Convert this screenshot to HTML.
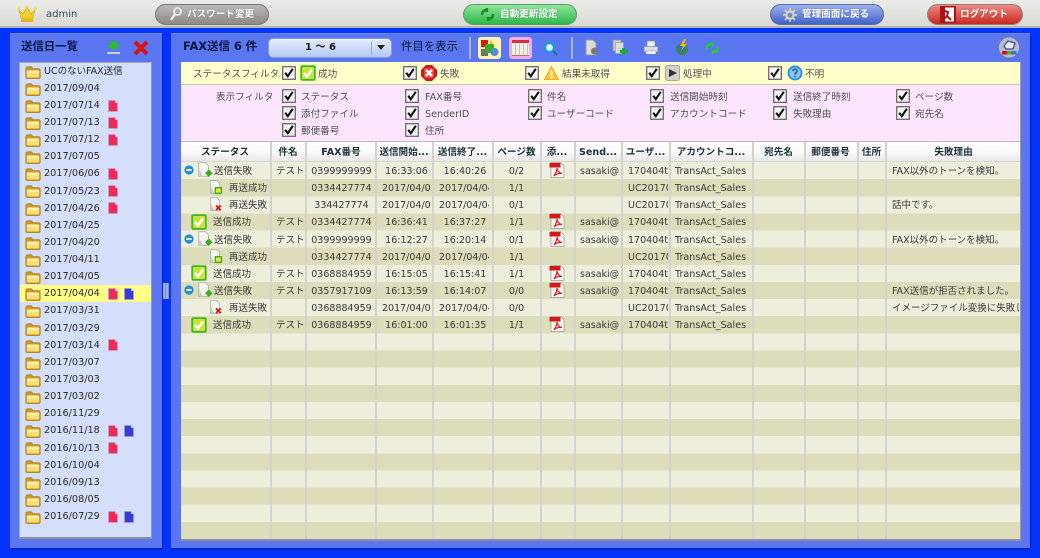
<!DOCTYPE html>
<html lang="ja"><head><meta charset="utf-8"><title>FAX送信</title>
<style>
*{box-sizing:border-box}
html,body{margin:0;padding:0;width:1040px;height:558px;overflow:hidden;background:#0433ff}
body{font-family:"DejaVu Sans","Noto Sans CJK JP",sans-serif;font-size:9.5px;color:#444}
#w{position:absolute;left:0;top:0;width:1040px;height:558px;overflow:hidden;filter:blur(.35px)}
.a{position:absolute}
.t{position:absolute;white-space:nowrap;line-height:17px;height:17px}
svg{position:absolute;overflow:visible}
#top{left:0;top:0;width:1040px;height:28px;background:linear-gradient(#ececea,#d8d8d4);border-bottom:2px solid #b5b5b2}
.pill{position:absolute;top:4px;height:21px;border-radius:11px;border:1px solid #777;color:#fff;font-weight:bold;line-height:20px;white-space:nowrap;font-size:9.6px;text-shadow:0 0 1px rgba(0,0,0,.3)}
.panel{position:absolute;background:#5a76f0;box-shadow:1px 2px 1px #0224c8;border-top:1px solid #6f88f2}
.d{font-size:9.7px;color:#2a2a2a;left:44px;margin-top:.7px}
.hi{left:20px;top:285px;width:131px;height:17px;background:#ffff88}
.h{position:absolute;top:0;height:20px;line-height:22px;text-align:center;font-weight:bold;color:#1f3238;white-space:nowrap;overflow:hidden;font-size:9.6px}
.c{position:absolute;top:1px;height:17px;line-height:17px;white-space:nowrap;overflow:hidden;color:#3a3a3a}
.a1{left:276px;width:29px}
.a2{left:307px;width:69px;text-align:center}
.a3{left:382px;width:49px;text-align:center}
.a3l{left:382px;width:49px}
.a4{left:439px;width:52px;text-align:center}
.a4l{left:439px;width:50px}
.a5{left:494px;width:45px;text-align:center}
.a7{left:580px;width:41px}
.a8{left:628px;width:40px}
.a9{left:675px;width:76px;font-size:9.6px}
.a13{left:892px;width:127px}
.sep{position:absolute;top:142px;height:397px;width:2px;background:#d3d3cc}
.f{font-size:9.6px;color:#505050;margin-top:1px}
</style></head><body>
<svg width="0" height="0" style="position:absolute">
<defs>
<symbol id="folder" viewBox="0 0 16 13"><path d="M.8 3Q.8 .8 2.800 .8H6.500L8 2.600H13.500Q15.200 2.600 15.200 4.300V11Q15.200 12.600 13.500 12.600H2.500Q.8 12.600 .8 11Z" fill="#c8962c" stroke="#b08020" stroke-width=".8"/><path d="M1.800 5.800Q1.800 4.300 3.200 4.300H12.800Q14.200 4.300 14.200 5.800V10.400Q14.200 11.500 12.800 11.500H3.200Q1.800 11.500 1.800 10.400Z" fill="#f9de72"/><rect x="2.500" y="5" width="11" height="2.200" fill="#fdf0b0"/></symbol>
<symbol id="red" viewBox="0 0 10 12"><path d="M.5.5H7L9.5 3V11.500H.5Z" fill="#ee2a58" stroke="#c8a0c8" stroke-width=".7"/><path d="M7 .5V3H9.5Z" fill="#ffc0d0"/></symbol>
<symbol id="blue" viewBox="0 0 10 12"><path d="M.5.5H7L9.5 3V11.500H.5Z" fill="#3a3ad8" stroke="#98a0d8" stroke-width=".7"/><path d="M7 .5V3H9.5Z" fill="#c8d0ff"/></symbol>
<symbol id="cb" viewBox="0 0 14 14"><rect x=".7" y=".7" width="12.6" height="12.6" fill="#f4f4f4" stroke="#6a6a6a" stroke-width="1.300"/><path d="M3.200 6.800L5.800 10.200L10.800 2.800" fill="none" stroke="#111" stroke-width="2.100"/></symbol>
<symbol id="ok" viewBox="0 0 16 16"><rect x=".3" y=".3" width="15.400" height="15.400" rx="2" fill="#3eb822"/><rect x="2" y="2" width="12" height="12" rx="1" fill="#c8e43c"/><path d="M4 8L7 11.500L12 4.500" fill="none" stroke="#fff" stroke-width="2.400"/></symbol>
<symbol id="pdf" viewBox="0 0 16 16"><path d="M2 .5H11.500L15 4V15.500H2Z" fill="#f8f8f6" stroke="#999" stroke-width=".7"/><rect x=".5" y="1" width="11" height="4.500" fill="#d81818"/><path d="M5 14C7 11 8 8 8 6C8.500 9 10 11 13 11.500C10 11 7 12 5 14Z" fill="none" stroke="#e02020" stroke-width="1.200"/></symbol>
<symbol id="pg" viewBox="0 0 12 16"><path d="M.8.8H8L11.200 4V15.200H.8Z" fill="#f6f6f2" stroke="#a8a8a0" stroke-width=".8"/><path d="M1.500 15V8L5 15Z" fill="#c8c8c4"/></symbol>
<symbol id="minus" viewBox="0 0 10 10"><circle cx="5" cy="5" r="4.600" fill="#1c8fd8"/><rect x="2" y="3.500" width="6" height="3" rx=".6" fill="#d8f0ff" stroke="#0a5a98" stroke-width=".5"/></symbol>
<symbol id="st1" viewBox="0 0 16 17"><use href="#pg" x="0" y="0" width="12" height="16"/><path d="M11.500 8L15.500 12L11.500 16L7.500 12Z" fill="#38b020"/></symbol>
<symbol id="st2" viewBox="0 0 14 16"><use href="#pg" x="0" y="0" width="12" height="15"/><rect x="5.500" y="7.500" width="8" height="7.500" rx="1" fill="#38b020"/><rect x="7" y="9" width="5" height="4.500" fill="#e8e840"/></symbol>
<symbol id="st3" viewBox="0 0 14 16"><use href="#pg" x="0" y="0" width="12" height="15"/><path d="M7 9L12 14M12 9L7 14" stroke="#e01010" stroke-width="2"/></symbol>
</defs></svg>
<div id="w">
<div class="a" id="top"></div>
<svg style="left:17px;top:5px" width="20" height="18" viewBox="0 0 20 18"><path d="M2 5L6 9L10 2L14 9L18 5L16 13H4Z" fill="#f8d028" stroke="#d0a010" stroke-width=".6"/><rect x="4" y="13.500" width="12" height="3.500" fill="#e8b818"/><circle cx="2" cy="4" r="1.500" fill="#f8d830"/><circle cx="10" cy="2" r="1.500" fill="#f8d830"/><circle cx="18" cy="4" r="1.500" fill="#f8d830"/></svg>
<div class="t" style="left:46px;top:6px;font-size:10px;color:#2e555c">admin</div>
<div class="pill" style="left:155px;width:114px;background:linear-gradient(#bbb8b6,#8c8a8a);padding-left:31px">パスワード変更</div>
<svg style="left:169px;top:7px" width="13" height="15" viewBox="0 0 13 15"><circle cx="8.500" cy="4.500" r="3.500" fill="none" stroke="#e8eef0" stroke-width="1.800"/><path d="M6 7L2 13" stroke="#e8eef0" stroke-width="2.200"/></svg>
<div class="pill" style="left:463px;width:114px;background:linear-gradient(#8fe49a,#2fb84a);padding-left:36px;border-color:#5c9c68">自動更新設定</div>
<svg style="left:480px;top:8px" width="15" height="13" viewBox="0 0 15 13"><path d="M2 7Q2 2 7 2M7 0V4M13 6Q13 11 8 11M8 9V13" fill="none" stroke="#1a8a20" stroke-width="2.400"/></svg>
<div class="pill" style="left:770px;width:114px;background:linear-gradient(#9db0ee,#3f63c8);padding-left:31px;border-color:#5a6c9c">管理画面に戻る</div>
<svg style="left:783px;top:8px" width="14" height="14" viewBox="0 0 14 14"><circle cx="7" cy="7" r="3.600" fill="none" stroke="#d8d0b8" stroke-width="2.400"/><path d="M7 0V3M7 11V14M0 7H3M11 7H14M2 2L4 4M10 10L12 12M12 2L10 4M4 10L2 12" stroke="#d8d0b8" stroke-width="1.800"/></svg>
<div class="pill" style="left:927px;width:96px;background:linear-gradient(#ee8a84,#c8281e);padding-left:32px;border-color:#8e8080;font-size:9.6px">ログアウト</div>
<svg style="left:940px;top:6px" width="16" height="17" viewBox="0 0 16 17"><rect width="16" height="17" fill="#a81414"/><rect x="5" y="1.500" width="9" height="14" fill="#fff"/><path d="M2 4L8 6L7 10L11 14M7 10L3 14" stroke="#a81414" stroke-width="2" fill="none"/></svg>

<!-- left panel -->
<div class="panel" style="left:10px;top:33px;width:152px;height:515px"></div>
<div class="t" style="left:21px;top:38px;font-weight:bold;font-size:11.400px;color:#0a1840">送信日一覧</div>
<svg style="left:106px;top:40px" width="15" height="15" viewBox="0 0 15 15"><path d="M4.500 1H10.500V5H14L7.500 10.500L1 5H4.500Z" fill="#28c020"/><rect x="1" y="12" width="13" height="2" fill="#c8d0c8"/></svg>
<svg style="left:133px;top:40px" width="16" height="16" viewBox="0 0 16 16"><path d="M2 2L14 14M14 2L2 14" stroke="#e01010" stroke-width="4"/></svg>
<div class="a" style="left:19px;top:62px;width:133px;height:477px;background:#d5dffb;border:1px solid #a8a8b0;border-right-color:#9a9aa4;border-bottom:2px solid #8e8e98"></div>
<div class="a hi"></div>
<div class="t d" style="top:62px;font-size:9.5px">UCのないFAX送信</div>
<div class="t d" style="top:79px">2017/09/04</div>
<div class="t d" style="top:96.300px">2017/07/14</div>
<div class="t d" style="top:113.400px">2017/07/13</div>
<div class="t d" style="top:130.500px">2017/07/12</div>
<div class="t d" style="top:147.700px">2017/07/05</div>
<div class="t d" style="top:164.800px">2017/06/06</div>
<div class="t d" style="top:181.900px">2017/05/23</div>
<div class="t d" style="top:199px">2017/04/26</div>
<div class="t d" style="top:216.200px">2017/04/25</div>
<div class="t d" style="top:233.300px">2017/04/20</div>
<div class="t d" style="top:250.400px">2017/04/11</div>
<div class="t d" style="top:267.600px">2017/04/05</div>
<div class="t d" style="top:284.700px">2017/04/04</div>
<div class="t d" style="top:301.800px">2017/03/31</div>
<div class="t d" style="top:319px">2017/03/29</div>
<div class="t d" style="top:336.100px">2017/03/14</div>
<div class="t d" style="top:353.200px">2017/03/07</div>
<div class="t d" style="top:370.300px">2017/03/03</div>
<div class="t d" style="top:387.500px">2017/03/02</div>
<div class="t d" style="top:404.600px">2016/11/29</div>
<div class="t d" style="top:421.700px">2016/11/18</div>
<div class="t d" style="top:438.900px">2016/10/13</div>
<div class="t d" style="top:456px">2016/10/04</div>
<div class="t d" style="top:473.100px">2016/09/13</div>
<div class="t d" style="top:490.200px">2016/08/05</div>
<div class="t d" style="top:507.400px">2016/07/29</div>
<svg style="left:25px;top:65.500px" width="16" height="13"><use href="#folder"/></svg>
<svg style="left:25px;top:82.600px" width="16" height="13"><use href="#folder"/></svg>
<svg style="left:25px;top:99.800px" width="16" height="13"><use href="#folder"/></svg>
<svg style="left:25px;top:116.900px" width="16" height="13"><use href="#folder"/></svg>
<svg style="left:25px;top:134px" width="16" height="13"><use href="#folder"/></svg>
<svg style="left:25px;top:151.200px" width="16" height="13"><use href="#folder"/></svg>
<svg style="left:25px;top:168.300px" width="16" height="13"><use href="#folder"/></svg>
<svg style="left:25px;top:185.400px" width="16" height="13"><use href="#folder"/></svg>
<svg style="left:25px;top:202.500px" width="16" height="13"><use href="#folder"/></svg>
<svg style="left:25px;top:219.700px" width="16" height="13"><use href="#folder"/></svg>
<svg style="left:25px;top:236.800px" width="16" height="13"><use href="#folder"/></svg>
<svg style="left:25px;top:253.900px" width="16" height="13"><use href="#folder"/></svg>
<svg style="left:25px;top:271.100px" width="16" height="13"><use href="#folder"/></svg>
<svg style="left:25px;top:288.200px" width="16" height="13"><use href="#folder"/></svg>
<svg style="left:25px;top:305.300px" width="16" height="13"><use href="#folder"/></svg>
<svg style="left:25px;top:322.500px" width="16" height="13"><use href="#folder"/></svg>
<svg style="left:25px;top:339.600px" width="16" height="13"><use href="#folder"/></svg>
<svg style="left:25px;top:356.700px" width="16" height="13"><use href="#folder"/></svg>
<svg style="left:25px;top:373.800px" width="16" height="13"><use href="#folder"/></svg>
<svg style="left:25px;top:391px" width="16" height="13"><use href="#folder"/></svg>
<svg style="left:25px;top:408.100px" width="16" height="13"><use href="#folder"/></svg>
<svg style="left:25px;top:425.200px" width="16" height="13"><use href="#folder"/></svg>
<svg style="left:25px;top:442.400px" width="16" height="13"><use href="#folder"/></svg>
<svg style="left:25px;top:459.500px" width="16" height="13"><use href="#folder"/></svg>
<svg style="left:25px;top:476.600px" width="16" height="13"><use href="#folder"/></svg>
<svg style="left:25px;top:493.700px" width="16" height="13"><use href="#folder"/></svg>
<svg style="left:25px;top:510.900px" width="16" height="13"><use href="#folder"/></svg>
<svg style="left:107.500px;top:99.500px" width="10" height="12"><use href="#red"/></svg>
<svg style="left:107.500px;top:116.500px" width="10" height="12"><use href="#red"/></svg>
<svg style="left:107.500px;top:133.500px" width="10" height="12"><use href="#red"/></svg>
<svg style="left:107.500px;top:168px" width="10" height="12"><use href="#red"/></svg>
<svg style="left:107.500px;top:185px" width="10" height="12"><use href="#red"/></svg>
<svg style="left:107.500px;top:202px" width="10" height="12"><use href="#red"/></svg>
<svg style="left:107.500px;top:287.500px" width="10" height="12"><use href="#red"/></svg>
<svg style="left:123.500px;top:287.500px" width="10" height="12"><use href="#blue"/></svg>
<svg style="left:107.500px;top:339px" width="10" height="12"><use href="#red"/></svg>
<svg style="left:107.500px;top:424.500px" width="10" height="12"><use href="#red"/></svg>
<svg style="left:123.500px;top:424.500px" width="10" height="12"><use href="#blue"/></svg>
<svg style="left:107.500px;top:441.500px" width="10" height="12"><use href="#red"/></svg>
<svg style="left:107.500px;top:510.500px" width="10" height="12"><use href="#red"/></svg>
<svg style="left:123.500px;top:510.500px" width="10" height="12"><use href="#blue"/></svg>
<div class="a" style="left:163px;top:283px;width:6px;height:16px;background:repeating-linear-gradient(90deg,#9fb0dc 0 2px,#7f90d0 2px 3px)"></div>

<!-- right panel -->
<div class="panel" style="left:171px;top:33px;width:859px;height:515px"></div>
<div class="t" style="left:183px;top:38px;font-weight:bold;font-size:11.400px;color:#0a1840">FAX送信 6 件</div>
<div class="a" style="left:268px;top:38px;width:124px;height:20px;border-radius:5px;background:linear-gradient(#e6eeff,#b4c8f4);border:1px solid #8a9ad0"></div>
<div class="t" style="left:268px;top:39px;width:105px;text-align:center;font-weight:bold;font-size:10px;color:#111">1 ～ 6</div>
<div class="a" style="left:371px;top:42px;width:1px;height:13px;background:#98a8d8"></div>
<svg style="left:377px;top:45px" width="8" height="6"><path d="M0 0H8L4 5Z" fill="#222"/></svg>
<div class="t" style="left:401px;top:38px;font-size:11.400px;color:#0a1a40">件目を表示</div>
<div class="a" style="left:469px;top:37px;width:2px;height:22px;background:#a4b2e0"></div>
<div class="a" style="left:570.500px;top:37px;width:2px;height:22px;background:#a4b2e0"></div>
<div class="a" style="left:478px;top:37px;width:23px;height:22px;background:#fff2b4;border-radius:3px"></div>
<svg style="left:480px;top:39px" width="19" height="18" viewBox="0 0 19 18"><rect x="1" y="1" width="7" height="7" fill="#d81818"/><path d="M11 1L15 8H8Z" fill="#f0c020"/><rect x="1" y="10" width="7" height="7" fill="#707070"/><rect x="5" y="5" width="9" height="9" rx="1" fill="#38b020"/><circle cx="14.500" cy="13" r="4" fill="#4a90d8"/></svg>
<div class="a" style="left:509px;top:37px;width:23px;height:22px;background:#f8a8e4;border-radius:3px"></div>
<div class="a" style="left:512px;top:40px;width:17px;height:16px;background:repeating-linear-gradient(90deg,#f2eee4 0 3px,#c8c0b0 3px 4px);border-top:3px solid #d03040;border-bottom:1px solid #a08070"></div>
<svg style="left:543px;top:41px" width="15" height="15" viewBox="0 0 15 15"><circle cx="6.500" cy="6.500" r="4.500" fill="#e4f6ff" stroke="#1aa0d0" stroke-width="2.200"/><path d="M10 10L14 14" stroke="#1a70a0" stroke-width="2"/></svg>
<svg style="left:585px;top:39px" width="14" height="18" viewBox="0 0 14 18"><path d="M1 1H8L11 4V16H1Z" fill="#dcdcd8" stroke="#989890" stroke-width=".8"/><circle cx="9.500" cy="12" r="3.500" fill="#7a7a78"/></svg>
<svg style="left:612px;top:39px" width="17" height="18" viewBox="0 0 17 18"><rect x="1" y="1" width="8" height="11" fill="#c8c8c4" stroke="#989890" stroke-width=".6"/><rect x="3.500" y="3.500" width="8" height="11" fill="#dcdcd8" stroke="#989890" stroke-width=".6"/><path d="M10 9H13V11H16V14H13V16H10V14H8V11H10Z" fill="#20a838"/></svg>
<svg style="left:643px;top:40px" width="16" height="15" viewBox="0 0 16 15"><rect x="4" y="1" width="8" height="6" fill="#f0f0f0" stroke="#909090" stroke-width=".7"/><rect x="1" y="6.500" width="14" height="5.500" rx="1" fill="#d8dcec" stroke="#8a8a98" stroke-width=".7"/><rect x="3" y="11" width="10" height="3" fill="#fff" stroke="#909090" stroke-width=".6"/></svg>
<svg style="left:675px;top:39px" width="14" height="17" viewBox="0 0 14 17"><circle cx="7" cy="10" r="6" fill="#3a8a50"/><path d="M3 7Q7 5 11 8L8 12L4 12Z" fill="#2a70c8"/><path d="M9 0L5 7H8L6 12L12 5H9L11 0Z" fill="#f8b020"/></svg>
<svg style="left:705px;top:41px" width="15" height="14" viewBox="0 0 15 14"><path d="M2 8Q2 3 7 3M7 1V5M13 6Q13 11 8 11M8 9V13" fill="none" stroke="#22d020" stroke-width="2.400"/></svg>
<svg style="left:998px;top:37px" width="22" height="21" viewBox="0 0 22 21"><circle cx="11" cy="10.500" r="10.500" fill="#b4bcd4" stroke="#6a7498" stroke-width=".7"/><path d="M6 9L10 4L17 6L15 12L8 12Z" fill="#e8eef8" stroke="#3a4a78" stroke-width="1.200"/><rect x="4" y="14" width="5" height="3.500" fill="#c81818"/><rect x="9" y="14" width="4.500" height="3.500" fill="#58a838"/><rect x="13.500" y="14" width="5" height="3.500" fill="#3a70c8"/></svg>

<!-- filters -->
<div class="a" style="left:181px;top:62px;width:839px;height:22px;background:#ffffcc"></div>
<div class="a" style="left:181px;top:84px;width:839px;height:1px;background:#c4c4b4"></div>
<div class="a" style="left:181px;top:85px;width:839px;height:56px;background:#fde6fd"></div>
<div class="a" style="left:181px;top:141px;width:839px;height:1px;background:#bcbcc4"></div>
<div class="t f" style="left:193px;top:65px">ステータスフィルタ</div>
<svg style="left:281.500px;top:66px" width="14" height="14"><use href="#cb"/></svg>
<svg style="left:300px;top:65px" width="16" height="16"><use href="#ok"/></svg>
<div class="t f" style="left:318px;top:65px">成功</div>
<svg style="left:403px;top:66px" width="14" height="14"><use href="#cb"/></svg>
<svg style="left:421px;top:65px" width="16" height="16" viewBox="0 0 16 16"><path d="M5 0H11L16 5V11L11 16H5L0 11V5Z" fill="#d01818"/><rect x="3" y="3" width="10" height="10" rx="2" fill="#e84848"/><path d="M5 5L11 11M11 5L5 11" stroke="#fff" stroke-width="2.400"/></svg>
<div class="t f" style="left:440px;top:65px">失敗</div>
<svg style="left:525px;top:66px" width="14" height="14"><use href="#cb"/></svg>
<svg style="left:544px;top:66px" width="15" height="14" viewBox="0 0 15 14"><path d="M7.500 .5L14.500 13.500H.5Z" fill="#f8c838" stroke="#e8a020" stroke-width=".8"/><path d="M7.500 4.500V9.500M7.500 10.500V12.500" stroke="#fff" stroke-width="1.800"/></svg>
<div class="t f" style="left:562px;top:65px">結果未取得</div>
<svg style="left:646px;top:66px" width="14" height="14"><use href="#cb"/></svg>
<svg style="left:665px;top:65px" width="15" height="16" viewBox="0 0 15 16"><rect x=".5" y=".5" width="14" height="15" rx="2" fill="#d0d0cc" stroke="#a8a8a4"/><path d="M4 4L12 8L4 12Z" fill="#333"/></svg>
<div class="t f" style="left:683px;top:65px">処理中</div>
<svg style="left:768px;top:66px" width="14" height="14"><use href="#cb"/></svg>
<svg style="left:787px;top:65px" width="16" height="16" viewBox="0 0 16 16"><circle cx="8" cy="8" r="7.500" fill="#2f8fd8"/><circle cx="8" cy="8" r="5.600" fill="#8cc4ec"/><path d="M5.800 6.200Q6 4.300 8 4.300Q10.300 4.300 10.200 6.200Q10.100 7.400 8 8.400V9.800M8 10.800V12.300" fill="none" stroke="#1860b0" stroke-width="1.500"/></svg>
<div class="t f" style="left:805px;top:65px">不明</div>

<div class="t f" style="left:216px;top:88px">表示フィルタ</div>
<svg style="left:281.500px;top:89px" width="14" height="14"><use href="#cb"/></svg><div class="t f" style="left:301px;top:88px">ステータス</div>
<svg style="left:405px;top:89px" width="14" height="14"><use href="#cb"/></svg><div class="t f" style="left:425px;top:88px">FAX番号</div>
<svg style="left:528px;top:89px" width="14" height="14"><use href="#cb"/></svg><div class="t f" style="left:547px;top:88px">件名</div>
<svg style="left:650px;top:89px" width="14" height="14"><use href="#cb"/></svg><div class="t f" style="left:670px;top:88px">送信開始時刻</div>
<svg style="left:773px;top:89px" width="14" height="14"><use href="#cb"/></svg><div class="t f" style="left:793px;top:88px">送信終了時刻</div>
<svg style="left:896px;top:89px" width="14" height="14"><use href="#cb"/></svg><div class="t f" style="left:915px;top:88px">ページ数</div>
<svg style="left:281.500px;top:106px" width="14" height="14"><use href="#cb"/></svg><div class="t f" style="left:301px;top:105px">添付ファイル</div>
<svg style="left:405px;top:106px" width="14" height="14"><use href="#cb"/></svg><div class="t f" style="left:425px;top:105px">SenderID</div>
<svg style="left:528px;top:106px" width="14" height="14"><use href="#cb"/></svg><div class="t f" style="left:547px;top:105px">ユーザーコード</div>
<svg style="left:650px;top:106px" width="14" height="14"><use href="#cb"/></svg><div class="t f" style="left:670px;top:105px">アカウントコード</div>
<svg style="left:773px;top:106px" width="14" height="14"><use href="#cb"/></svg><div class="t f" style="left:793px;top:105px">失敗理由</div>
<svg style="left:896px;top:106px" width="14" height="14"><use href="#cb"/></svg><div class="t f" style="left:915px;top:105px">宛先名</div>
<svg style="left:281.500px;top:123px" width="14" height="14"><use href="#cb"/></svg><div class="t f" style="left:301px;top:122px">郵便番号</div>
<svg style="left:405px;top:123px" width="14" height="14"><use href="#cb"/></svg><div class="t f" style="left:425px;top:122px">住所</div>

<!-- table -->
<div class="a" style="left:181px;top:142px;width:839px;height:20px;background:linear-gradient(#fff,#fafafa 50%,#e8e8e8);border-bottom:1px solid #d8d8d0"></div>
<div class="a" style="left:181px;top:162px;width:839px;height:377px;background:repeating-linear-gradient(#eeeedd 0,#eeeedd 17.136px,#ddddbb 17.136px,#ddddbb 34.272px)"></div>
<div class="a" style="left:1020px;top:62px;width:1px;height:477px;background:#9a9aa8"></div>
<div class="a" style="left:181px;top:539px;width:840px;height:1.500px;background:#8e8ea0"></div>

<div class="a" style="left:0;top:142px;width:1040px;height:20px">
<div class="h" style="left:181px;width:88px">ステータス</div>
<div class="h" style="left:271px;width:34px">件名</div>
<div class="h" style="left:307px;width:68px">FAX番号</div>
<div class="h" style="left:377px;width:54px">送信開始...</div>
<div class="h" style="left:433px;width:59px">送信終了...</div>
<div class="h" style="left:494px;width:45px">ページ数</div>
<div class="h" style="left:541px;width:32px">添...</div>
<div class="h" style="left:575px;width:46px">Send...</div>
<div class="h" style="left:623px;width:45px">ユーザ...</div>
<div class="h" style="left:670px;width:82px">アカウントコ...</div>
<div class="h" style="left:754px;width:49px">宛先名</div>
<div class="h" style="left:805px;width:51px">郵便番号</div>
<div class="h" style="left:858px;width:27px">住所</div>
<div class="h" style="left:887px;width:133px">失敗理由</div>
</div>

<div class="a" style="left:0;top:162px;width:1040px;height:17px">
<svg style="left:184px;top:3px" width="10" height="10"><use href="#minus"/></svg>
<svg style="left:198px;top:0" width="15" height="16"><use href="#st1"/></svg>
<div class="c" style="left:214px;width:54px">送信失敗</div>
<div class="c a1">テスト</div><div class="c a2">0399999999</div><div class="c a3">16:33:06</div><div class="c a4">16:40:26</div><div class="c a5">0/2</div>
<svg style="left:549px;top:0" width="16" height="16"><use href="#pdf"/></svg>
<div class="c a7">sasaki@</div><div class="c a8">170404t</div><div class="c a9">TransAct_Sales</div><div class="c a13">FAX以外のトーンを検知。</div>
</div>
<div class="a" style="left:0;top:179.140px;width:1040px;height:17px">
<svg style="left:209px;top:1px" width="14" height="15"><use href="#st2"/></svg>
<div class="c" style="left:229px;width:40px">再送成功</div>
<div class="c a2">0334427774</div><div class="c a3l">2017/04/04</div><div class="c a4l">2017/04/04</div><div class="c a5">1/1</div>
<div class="c a8">UC20170</div><div class="c a9">TransAct_Sales</div>
</div>
<div class="a" style="left:0;top:196.270px;width:1040px;height:17px">
<svg style="left:209px;top:1px" width="14" height="15"><use href="#st3"/></svg>
<div class="c" style="left:229px;width:40px">再送失敗</div>
<div class="c a2">334427774</div><div class="c a3l">2017/04/04</div><div class="c a4l">2017/04/04</div><div class="c a5">0/1</div>
<div class="c a8">UC20170</div><div class="c a9">TransAct_Sales</div><div class="c a13">話中です。</div>
</div>
<div class="a" style="left:0;top:213.410px;width:1040px;height:17px">
<svg style="left:190.500px;top:.5px" width="16" height="16"><use href="#ok"/></svg>
<div class="c" style="left:213px;width:54px">送信成功</div>
<div class="c a1">テスト</div><div class="c a2">0334427774</div><div class="c a3">16:36:41</div><div class="c a4">16:37:27</div><div class="c a5">1/1</div>
<svg style="left:549px;top:0" width="16" height="16"><use href="#pdf"/></svg>
<div class="c a7">sasaki@</div><div class="c a8">170404t</div><div class="c a9">TransAct_Sales</div>
</div>
<div class="a" style="left:0;top:230.540px;width:1040px;height:17px">
<svg style="left:184px;top:3px" width="10" height="10"><use href="#minus"/></svg>
<svg style="left:198px;top:0" width="15" height="16"><use href="#st1"/></svg>
<div class="c" style="left:214px;width:54px">送信失敗</div>
<div class="c a1">テスト</div><div class="c a2">0399999999</div><div class="c a3">16:12:27</div><div class="c a4">16:20:14</div><div class="c a5">0/1</div>
<svg style="left:549px;top:0" width="16" height="16"><use href="#pdf"/></svg>
<div class="c a7">sasaki@</div><div class="c a8">170404t</div><div class="c a9">TransAct_Sales</div><div class="c a13">FAX以外のトーンを検知。</div>
</div>
<div class="a" style="left:0;top:247.680px;width:1040px;height:17px">
<svg style="left:209px;top:1px" width="14" height="15"><use href="#st2"/></svg>
<div class="c" style="left:229px;width:40px">再送成功</div>
<div class="c a2">0334427774</div><div class="c a3l">2017/04/04</div><div class="c a4l">2017/04/04</div><div class="c a5">1/1</div>
<div class="c a8">UC20170</div><div class="c a9">TransAct_Sales</div>
</div>
<div class="a" style="left:0;top:264.820px;width:1040px;height:17px">
<svg style="left:190.500px;top:.5px" width="16" height="16"><use href="#ok"/></svg>
<div class="c" style="left:213px;width:54px">送信成功</div>
<div class="c a1">テスト</div><div class="c a2">0368884959</div><div class="c a3">16:15:05</div><div class="c a4">16:15:41</div><div class="c a5">1/1</div>
<svg style="left:549px;top:0" width="16" height="16"><use href="#pdf"/></svg>
<div class="c a7">sasaki@</div><div class="c a8">170404t</div><div class="c a9">TransAct_Sales</div>
</div>
<div class="a" style="left:0;top:281.950px;width:1040px;height:17px">
<svg style="left:184px;top:3px" width="10" height="10"><use href="#minus"/></svg>
<svg style="left:198px;top:0" width="15" height="16"><use href="#st1"/></svg>
<div class="c" style="left:214px;width:54px">送信失敗</div>
<div class="c a1">テスト</div><div class="c a2">0357917109</div><div class="c a3">16:13:59</div><div class="c a4">16:14:07</div><div class="c a5">0/0</div>
<svg style="left:549px;top:0" width="16" height="16"><use href="#pdf"/></svg>
<div class="c a7">sasaki@</div><div class="c a8">170404t</div><div class="c a9">TransAct_Sales</div><div class="c a13">FAX送信が拒否されました。</div>
</div>
<div class="a" style="left:0;top:299.090px;width:1040px;height:17px">
<svg style="left:209px;top:1px" width="14" height="15"><use href="#st3"/></svg>
<div class="c" style="left:229px;width:40px">再送失敗</div>
<div class="c a2">0368884959</div><div class="c a3l">2017/04/04</div><div class="c a4l">2017/04/04</div><div class="c a5">0/0</div>
<div class="c a8">UC20170</div><div class="c a9">TransAct_Sales</div><div class="c a13">イメージファイル変換に失敗しました</div>
</div>
<div class="a" style="left:0;top:316.220px;width:1040px;height:17px">
<svg style="left:190.500px;top:.5px" width="16" height="16"><use href="#ok"/></svg>
<div class="c" style="left:213px;width:54px">送信成功</div>
<div class="c a1">テスト</div><div class="c a2">0368884959</div><div class="c a3">16:01:00</div><div class="c a4">16:01:35</div><div class="c a5">1/1</div>
<svg style="left:549px;top:0" width="16" height="16"><use href="#pdf"/></svg>
<div class="c a7">sasaki@</div><div class="c a8">170404t</div><div class="c a9">TransAct_Sales</div>
</div>

<div class="sep" style="left:269.500px"></div>
<div class="sep" style="left:305px"></div>
<div class="sep" style="left:375px"></div>
<div class="sep" style="left:431.500px"></div>
<div class="sep" style="left:492px"></div>
<div class="sep" style="left:539.500px"></div>
<div class="sep" style="left:573.500px"></div>
<div class="sep" style="left:621px"></div>
<div class="sep" style="left:668.500px"></div>
<div class="sep" style="left:752px"></div>
<div class="sep" style="left:803.500px"></div>
<div class="sep" style="left:856.500px"></div>
<div class="sep" style="left:885px"></div>
</div>
</body></html>
